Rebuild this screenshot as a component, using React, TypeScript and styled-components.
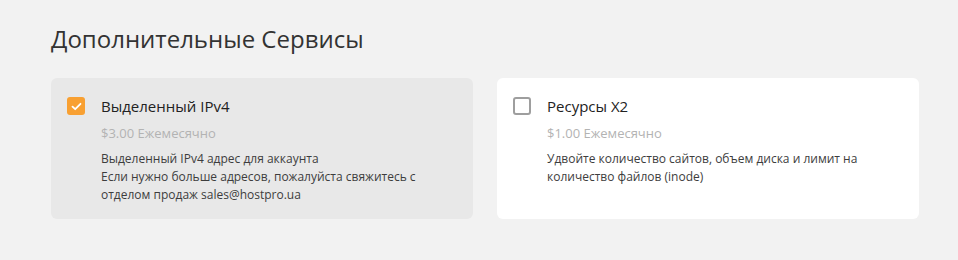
import * as React from "react";
import styled, { createGlobalStyle } from "styled-components";

const GlobalStyle = createGlobalStyle`
  html, body {
    margin: 0;
    padding: 0;
    background: #f2f2f2;
  }
  body {
    font-family: "Open Sans", "Liberation Sans", sans-serif;
  }
`;

const Page = styled.div`
  width: 958px;
  height: 260px;
  box-sizing: border-box;
  padding: 22px 39px 0 51px;
`;

const Title = styled.h2`
  margin: 0 0 22px;
  font-size: 24px;
  line-height: 34px;
  font-weight: 400;
  color: #333;
`;

const Grid = styled.div`
  display: grid;
  grid-template-columns: 422px 422px;
  column-gap: 24px;
`;

const Card = styled.div<{ $active?: boolean }>`
  display: flex;
  gap: 16px;
  height: 141px;
  box-sizing: border-box;
  padding: 19px 16px 0;
  border-radius: 6px;
  background: ${(p) => (p.$active ? "#e8e8e8" : "#ffffff")};
`;

const Box = styled.span<{ $checked?: boolean }>`
  flex: 0 0 auto;
  width: 18px;
  height: 18px;
  box-sizing: border-box;
  border-radius: 3px;
  display: flex;
  align-items: center;
  justify-content: center;
  background: ${(p) => (p.$checked ? "#f8a032" : "#ffffff")};
  border: ${(p) => (p.$checked ? "none" : "2px solid #9e9e9e")};
`;

const Body = styled.div`
  display: flex;
  flex-direction: column;
`;

const Name = styled.div`
  font-size: 15px;
  line-height: 18px;
  color: #222;
`;

const Price = styled.div`
  margin-top: 9px;
  font-size: 13px;
  line-height: 18px;
  color: #b3b3b3;
`;

const Text = styled.div`
  margin-top: 8px;
  font-size: 12px;
  line-height: 18px;
  color: #3d3d3d;
`;

const Check = () => (
  <svg width="11" height="9" viewBox="0 0 11 9" fill="none">
    <path d="M1.5 4.6 L4.2 7.2 L9.5 1.8" stroke="#fff" strokeWidth="1.8" strokeLinecap="round" strokeLinejoin="round" />
  </svg>
);

const App = () => (
  <Page>
    <GlobalStyle />
    <Title>Дополнительные Сервисы</Title>
    <Grid>
      <Card $active>
        <Box $checked>
          <Check />
        </Box>
        <Body>
          <Name>Выделенный IPv4</Name>
          <Price>$3.00 Ежемесячно</Price>
          <Text>
            Выделенный IPv4 адрес для аккаунта
            <br />
            Если нужно больше адресов, пожалуйста свяжитесь с отделом продаж sales@hostpro.ua
          </Text>
        </Body>
      </Card>
      <Card>
        <Box />
        <Body>
          <Name>Ресурсы X2</Name>
          <Price>$1.00 Ежемесячно</Price>
          <Text>Удвойте количество сайтов, объем диска и лимит на количество файлов (inode)</Text>
        </Body>
      </Card>
    </Grid>
  </Page>
);

export default App;
